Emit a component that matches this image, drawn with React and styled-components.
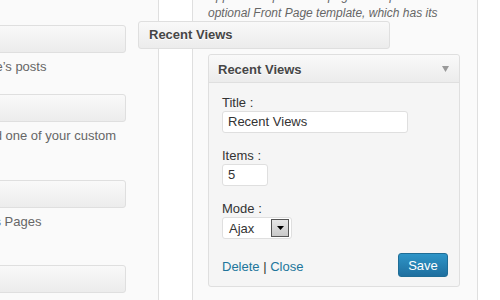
import React from 'react';
import styled, { createGlobalStyle } from 'styled-components';

const GlobalStyle = createGlobalStyle`
  body {
    margin: 0;
    background: #fff;
    font-family: "Liberation Sans", Arial, sans-serif;
    font-size: 13px;
    color: #333;
  }
`

const Screen = styled.div`
  position: relative;
  display: flex;
  width: 500px;
  height: 300px;
  overflow: hidden;
`

// left block of available widgets, mostly cut off by the window edge
const AvailableColumn = styled.div`
  flex: none;
  width: 252px;
  margin-left: -140px;
  padding: 25px 32px 0 14px;
  background: #fafafa;
  border-right: 1px solid #dfdfdf;
`
const Gutter = styled.div`
  flex: none;
  width: 33px;
`
const Sidebar = styled.div`
  flex: none;
  width: 252px;
  padding: 0 17px 0 15px;
  background: #fafafa;
  border-left: 1px solid #dfdfdf;
  border-right: 1px solid #dfdfdf;
`

const WidgetBar = styled.div`
  box-sizing: border-box;
  height: 28px;
  padding-left: 10px;
  line-height: 26px;
  border: 1px solid #dfdfdf;
  border-radius: 3px;
  background: linear-gradient(to bottom, #f9f9f9, #ececec);
  font-weight: bold;
  color: #464646;
  text-shadow: 0 1px 0 #fff;
`
const WidgetDescription = styled.p`
  margin: 0;
  padding: 5px 0 19px;
  line-height: 17px;
  min-height: ${({ rows }) => (rows > 1 ? 33 : 17)}px;
  color: #666;
`

const SidebarDescription = styled.p`
  margin: -12px 0 15px;
  font-size: 12px;
  line-height: 17px;
  font-style: italic;
  color: #666;
`

const DragHelper = styled(WidgetBar)`
  position: absolute;
  left: 138px;
  top: 21px;
  width: 252px;
`

const Panel = styled.div`
  box-sizing: border-box;
  width: 252px;
  border: 1px solid #dfdfdf;
  border-radius: 3px;
  background: #f5f5f5;
`
const PanelHeader = styled.div`
  box-sizing: border-box;
  display: flex;
  align-items: center;
  justify-content: space-between;
  height: 28px;
  padding: 1px 10px 0 9px;
  border-bottom: 1px solid #dfdfdf;
  background: linear-gradient(to bottom, #f9f9f9, #ececec);
  border-radius: 3px 3px 0 0;
  font-weight: bold;
  color: #464646;
  text-shadow: 0 1px 0 #fff;
`
const PanelBody = styled.div`
  padding: 11px 11px 9px 13px;
`
const Field = styled.div`
  margin-bottom: 14px;
`
const Label = styled.label`
  display: block;
  line-height: 17px;
  color: #333;
`
const TextInput = styled.div`
  box-sizing: border-box;
  width: ${({ w }) => w}px;
  height: 22px;
  padding: 0 5px;
  line-height: 20px;
  background: #fff;
  border: 1px solid #dfdfdf;
  border-radius: 3px;
  color: #333;
`
const SelectBox = styled.div`
  box-sizing: border-box;
  display: flex;
  align-items: center;
  width: 70px;
  height: 22px;
  padding: 0 2px 0 6px;
  background: #fff;
  border: 1px solid #dfdfdf;
  border-radius: 3px;
  color: #333;
`
const SelectValue = styled.span`
  flex: 1;
`
const SelectButton = styled.span`
  box-sizing: border-box;
  display: flex;
  align-items: center;
  justify-content: center;
  width: 18px;
  height: 18px;
  border: 1px solid #555;
  background: linear-gradient(to bottom, #e6e6e6, #c9c9c9);
`

const Footer = styled.div`
  display: flex;
  align-items: center;
  justify-content: space-between;
  margin-top: 14px;
`
const Links = styled.div`
  padding-top: 3px;
  color: #333;
`
const Link = styled.a`
  color: #21759b;
  text-decoration: none;
`
const SaveButton = styled.button`
  box-sizing: border-box;
  width: 50px;
  height: 24px;
  padding: 0;
  border: 1px solid #1f6d96;
  border-radius: 3px;
  background: linear-gradient(to bottom, #2e95c8, #1f6f9f);
  color: #fff;
  font-family: inherit;
  font-size: 13px;
`

const availableWidgets = [
  { title: 'Calendar', text: 'A calendar of your site\u2019s posts', rows: 1 },
  { title: 'Custom Menu', text: 'Use this widget to add one of your custom menus as a widget.', rows: 2 },
  { title: 'Pages', text: 'Your site\u2019s WordPress Pages', rows: 2 },
  { title: 'Recent Comments', text: 'The most recent comments', rows: 1 },
]

const App = () => {
  return (
    <>
      <GlobalStyle />
      <Screen>
        <AvailableColumn>
          {availableWidgets.map((w) => (
            <div key={w.title}>
              <WidgetBar>{w.title}</WidgetBar>
              <WidgetDescription rows={w.rows}>{w.text}</WidgetDescription>
            </div>
          ))}
        </AvailableColumn>
        <Gutter />
        <Sidebar>
          <SidebarDescription>
            Appears on posts and pages except the optional Front Page template, which has its own widgets
          </SidebarDescription>
          <Panel>
            <PanelHeader>
              <span>Recent Views</span>
              <svg width="7" height="6" viewBox="0 0 7 6">
                <polygon points="0,0 7,0 3.5,6" fill="#999" />
              </svg>
            </PanelHeader>
            <PanelBody>
              <Field>
                <Label>Title :</Label>
                <TextInput w={186}>Recent Views</TextInput>
              </Field>
              <Field>
                <Label>Items :</Label>
                <TextInput w={46}>5</TextInput>
              </Field>
              <Field>
                <Label>Mode :</Label>
                <SelectBox>
                  <SelectValue>Ajax</SelectValue>
                  <SelectButton>
                    <svg width="7" height="4" viewBox="0 0 7 4">
                      <polygon points="0,0 7,0 3.5,4" fill="#000" />
                    </svg>
                  </SelectButton>
                </SelectBox>
              </Field>
              <Footer>
                <Links>
                  <Link href="#">Delete</Link> | <Link href="#">Close</Link>
                </Links>
                <SaveButton>Save</SaveButton>
              </Footer>
            </PanelBody>
          </Panel>
        </Sidebar>
        <DragHelper>Recent Views</DragHelper>
      </Screen>
    </>
  )
}

export default App
